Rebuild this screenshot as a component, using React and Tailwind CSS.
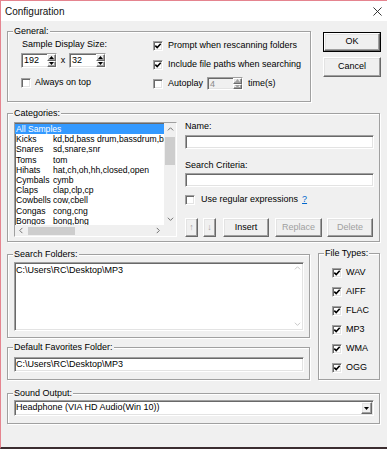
import React from "react";

const SUNKEN =
  "border border-t-[#a0a0a0] border-l-[#a0a0a0] border-b-white border-r-white shadow-[inset_1px_1px_0_#696969,inset_-1px_-1px_0_#e3e3e3]";
const RAISED =
  "border border-t-white border-l-white border-b-[#696969] border-r-[#696969] shadow-[inset_-1px_-1px_0_#a0a0a0,inset_1px_1px_0_#e3e3e3]";

const CATEGORIES = [
  ["All Samples", ""],
  ["Kicks", "kd,bd,bass drum,bassdrum,bass"],
  ["Snares", "sd,snare,snr"],
  ["Toms", "tom"],
  ["Hihats", "hat,ch,oh,hh,closed,open"],
  ["Cymbals", "cymb"],
  ["Claps", "clap,clp,cp"],
  ["Cowbells", "cow,cbell"],
  ["Congas", "cong,cng"],
  ["Bongos", "bong,bng"],
];

const FILE_TYPES = ["WAV", "AIFF", "FLAC", "MP3", "WMA", "OGG"];

function Group({ label, className = "", children }) {
  return (
    <fieldset className={`border border-[#a0a0a0] shadow-[inset_1px_1px_0_#fff,1px_1px_0_#fff] ${className}`}>
      <legend className="ml-[5px] bg-[#f0f0f0] px-[1px] leading-[11px]">{label}</legend>
      {children}
    </fieldset>
  );
}

function Check({ checked }) {
  return (
    <span className={`flex h-[10px] w-[10px] shrink-0 items-center justify-center bg-white ${SUNKEN}`}>
      {checked ? (
        <svg viewBox="0 0 8 8" className="h-[8px] w-[8px]">
          <path d="M1.3 3.6 L3.2 5.6 L6.7 1.8" stroke="#000" strokeWidth="1.6" fill="none" />
        </svg>
      ) : null}
    </span>
  );
}

function Tri({ up, color = "#000" }) {
  return (
    <svg viewBox="0 0 5 3" className="h-[3px] w-[5px]">
      <path d={up ? "M0 3 L2.5 0 L5 3 Z" : "M0 0 L5 0 L2.5 3 Z"} fill={color} />
    </svg>
  );
}

function Chevron({ dir, color = "#606060" }) {
  const d = {
    up: "M1 5 L4 2 L7 5",
    down: "M1 2 L4 5 L7 2",
    left: "M5 1 L2 4 L5 7",
    right: "M2 1 L5 4 L2 7",
  }[dir];
  return (
    <svg viewBox="0 0 8 8" className="h-[7px] w-[7px]">
      <path d={d} stroke={color} strokeWidth="1" fill="none" />
    </svg>
  );
}

function Spinner({ value, className, disabled }) {
  return (
    <div className={`flex ${SUNKEN} ${disabled ? "bg-[#f0f0f0]" : "bg-white"} ${className}`}>
      <div className={`flex-1 pl-[2px] leading-[12px] ${disabled ? "text-[#8a8a8a]" : ""}`}>{value}</div>
      <div className="flex w-[9px] flex-col">
        <div className={`flex flex-1 items-center justify-center bg-[#f0f0f0] ${RAISED}`}>
          <Tri up color={disabled ? "#a0a0a0" : "#000"} />
        </div>
        <div className={`flex flex-1 items-center justify-center bg-[#f0f0f0] ${RAISED}`}>
          <Tri color={disabled ? "#a0a0a0" : "#000"} />
        </div>
      </div>
    </div>
  );
}

function Button({ children, className = "", disabled, isDefault }) {
  const inner = (
    <div
      className={`flex h-full w-full items-center justify-center bg-[#f0f0f0] ${RAISED} ${
        disabled ? "text-[#a0a0a0]" : "text-black"
      }`}
    >
      {children}
    </div>
  );
  if (isDefault) {
    return <div className={`border border-black ${className}`}>{inner}</div>;
  }
  return <div className={className}>{inner}</div>;
}

function Field({ value, className = "" }) {
  return <div className={`bg-white pl-[1px] leading-[13px] ${SUNKEN} ${className}`}>{value}</div>;
}

export default function App() {
  return (
    <div className="h-[450px] w-[387px] bg-white font-['Liberation_Sans',Arial,sans-serif] text-[9px] text-black">
      <div className="flex h-[449px] flex-col border-l border-t border-[#e5848f] border-b-2 border-b-[#3b2d30] bg-[#f0f0f0]">
        {/* title bar */}
        <div className="flex h-[20px] items-center justify-between bg-white pl-[4px] pr-[5px]">
          <span className="text-[10px] text-[#111]">Configuration</span>
          <svg viewBox="0 0 10 10" className="h-[9px] w-[9px]">
            <path d="M0.5 0.5 L9.5 9.5 M9.5 0.5 L0.5 9.5" stroke="#222" strokeWidth="1" />
          </svg>
        </div>

        <div className="flex-1 pl-[6px] pt-[5px]">
          {/* general + buttons */}
          <div className="flex">
            <Group label="General:" className="h-[76px] w-[304px]">
              <div className="flex">
                <div className="w-[145px] pl-[13px]">
                  <div className="ml-[1px] mt-[2px] leading-[11px]">Sample Display Size:</div>
                  <div className="mt-[3px] flex items-center">
                    <Spinner value="192" className="h-[15px] w-[36px]" />
                    <span className="w-[12px] text-center">x</span>
                    <Spinner value="32" className="h-[15px] w-[37px]" />
                  </div>
                  <div className="mt-[9px] flex items-center gap-[4px]">
                    <Check />
                    <span className="leading-[11px]">Always on top</span>
                  </div>
                </div>
                <div>
                  <div className="mt-[3px] flex items-center gap-[5px]">
                    <Check checked />
                    <span className="leading-[11px]">Prompt when rescanning folders</span>
                  </div>
                  <div className="mt-[8px] flex items-center gap-[5px]">
                    <Check checked />
                    <span className="leading-[11px]">Include file paths when searching</span>
                  </div>
                  <div className="mt-[7px] flex items-center">
                    <Check />
                    <span className="ml-[5px] w-[39px] leading-[11px]">Autoplay</span>
                    <Spinner value="4" disabled className="h-[13px] w-[36px]" />
                    <span className="ml-[5px] leading-[11px]">time(s)</span>
                  </div>
                </div>
              </div>
            </Group>
            <div className="ml-[12px] mt-[6px] flex flex-col gap-[5px]">
              <Button isDefault className="h-[20px] w-[58px]">
                OK
              </Button>
              <Button className="h-[20px] w-[58px]">Cancel</Button>
            </div>
          </div>

          {/* categories */}
          <Group label="Categories:" className="mt-[6px] h-[134px] w-[373px]">
            <div className="flex">
              <div className={`ml-[6px] mt-[3px] grid h-[115px] w-[163px] grid-cols-[1fr_12px] grid-rows-[1fr_11px] bg-white ${SUNKEN}`}>
                <div className="overflow-hidden pt-[1px] text-[8.6px]">
                  {CATEGORIES.map(([name, tags], i) => (
                    <div
                      key={name}
                      className={`flex h-[10.2px] items-center whitespace-nowrap leading-[10px] ${
                        i === 0 ? "bg-[#3399ff] text-white" : ""
                      }`}
                    >
                      <span className="w-[38px] shrink-0 pl-[1px]">{name}</span>
                      <span>{tags}</span>
                    </div>
                  ))}
                </div>
                <div className="flex flex-col items-center bg-[#f0f0f0]">
                  <div className="flex h-[12px] items-center">
                    <Chevron dir="up" />
                  </div>
                  <div className="mt-[2px] h-[28px] w-[10px] bg-[#cdcdcd]" />
                  <div className="flex-1" />
                  <div className="flex h-[12px] items-center">
                    <Chevron dir="down" />
                  </div>
                </div>
                <div className="flex items-center bg-[#f0f0f0]">
                  <div className="flex w-[12px] justify-center">
                    <Chevron dir="left" />
                  </div>
                  <div className="ml-[1px] h-[8px] w-[47px] bg-[#cdcdcd]" />
                  <div className="flex-1" />
                  <div className="flex w-[12px] justify-center">
                    <Chevron dir="right" />
                  </div>
                </div>
                <div className="bg-[#f0f0f0]" />
              </div>

              <div className="ml-[8px] w-[189px]">
                <div className="mt-[2px] leading-[11px]">Name:</div>
                <Field className="mt-[3px] h-[14px] w-[189px]" />
                <div className="mt-[11px] leading-[11px]">Search Criteria:</div>
                <Field className="mt-[2px] h-[14px] w-[189px]" />
                <div className="mt-[7px] flex h-[11px] items-center">
                  <Check />
                  <span className="ml-[6px]">Use regular expressions</span>
                  <span className="ml-[4px] text-[#0066cc] underline">?</span>
                </div>
                <div className="mt-[13px] flex h-[19px]">
                  <Button disabled className="h-[19px] w-[13px]">
                    ↑
                  </Button>
                  <Button disabled className="ml-[5px] h-[19px] w-[13px]">
                    ↓
                  </Button>
                  <Button className="ml-[7px] h-[19px] w-[46px]">Insert</Button>
                  <Button disabled className="ml-[6px] h-[19px] w-[47px]">
                    Replace
                  </Button>
                  <Button disabled className="ml-[5px] h-[19px] w-[46px]">
                    Delete
                  </Button>
                </div>
              </div>
            </div>
          </Group>

          {/* folders + file types */}
          <div className="mt-[6px] flex items-start">
            <div className="w-[303px]">
              <Group label="Search Folders:" className="mt-[1px] h-[89px] w-[303px]">
                <div className={`ml-[6px] mt-[2px] flex h-[69px] w-[290px] bg-white ${SUNKEN}`}>
                  <div className="flex-1 pl-[1px] pt-[2px] leading-[11px]">C:\Users\RC\Desktop\MP3</div>
                  <div className="flex w-[12px] flex-col items-center justify-between py-[2px]">
                    <Chevron dir="up" color="#c0c0c0" />
                    <Chevron dir="down" color="#c0c0c0" />
                  </div>
                </div>
              </Group>
              <Group label="Default Favorites Folder:" className="mt-[4px] h-[38px] w-[303px]">
                <Field value="C:\Users\RC\Desktop\MP3" className="ml-[6px] mt-[4px] h-[15px] w-[290px]" />
              </Group>
            </div>
            <Group label="File Types:" className="ml-[8px] h-[132px] w-[62px]">
              <div className="ml-[13px] mt-[8px] flex flex-col gap-[8px]">
                {FILE_TYPES.map((t) => (
                  <div key={t} className="flex h-[11px] items-center gap-[4px]">
                    <Check checked />
                    <span>{t}</span>
                  </div>
                ))}
              </div>
            </Group>
          </div>

          {/* sound output */}
          <Group label="Sound Output:" className="mt-[8px] h-[36px] w-[373px]">
            <div className={`ml-[6px] mt-[1px] flex h-[16px] w-[360px] items-center bg-white ${SUNKEN}`}>
              <span className="flex-1 pl-[1px]">Headphone (VIA HD Audio(Win 10))</span>
              <div className={`mr-[1px] flex h-[12px] w-[11px] items-center justify-center bg-[#f0f0f0] ${RAISED}`}>
                <Tri />
              </div>
            </div>
          </Group>
        </div>
      </div>
    </div>
  );
}
